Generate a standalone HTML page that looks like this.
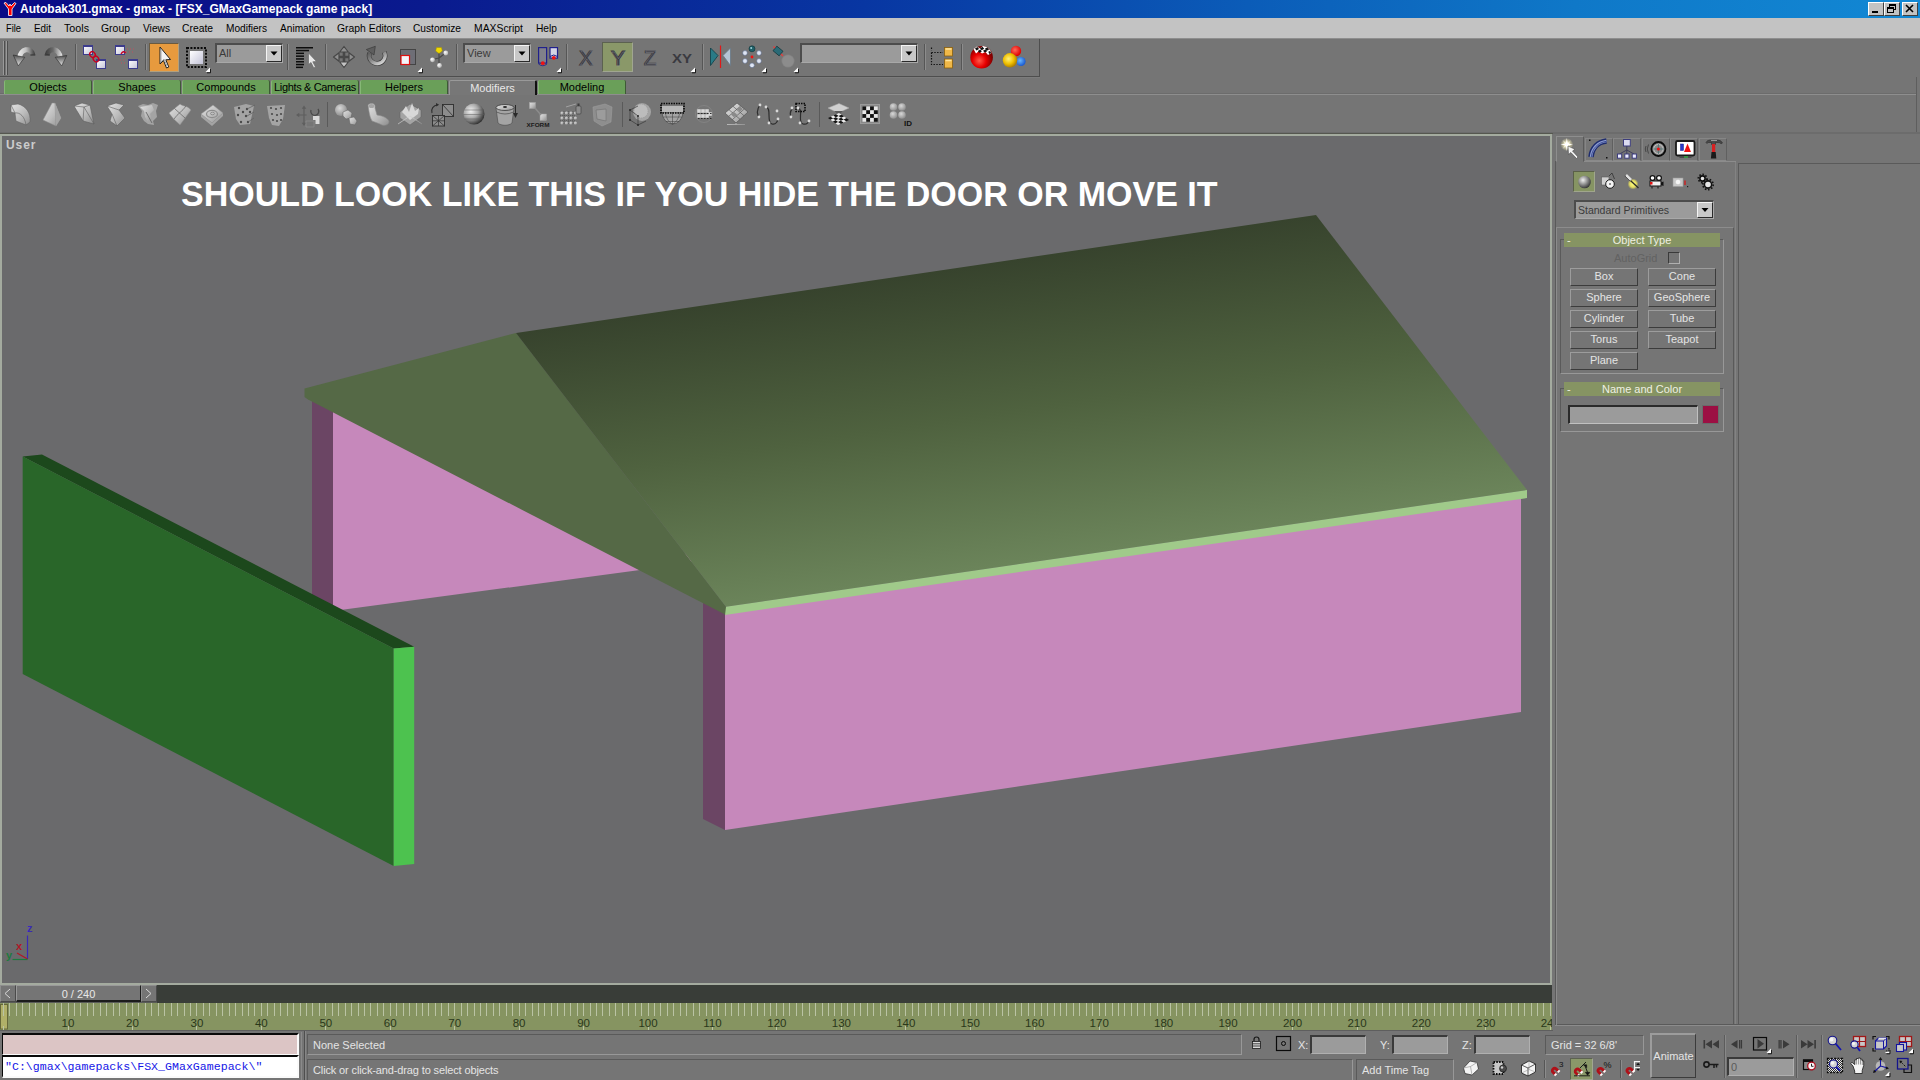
<!DOCTYPE html>
<html><head><meta charset="utf-8"><title>gmax</title>
<style>
*{box-sizing:border-box;margin:0;padding:0}
html,body{width:1920px;height:1080px;overflow:hidden;background:#757575}
body{position:relative;font-family:"Liberation Sans",sans-serif;font-size:11px;color:#000}
.a{position:absolute}
.t{position:absolute;white-space:nowrap;line-height:14px;height:14px}
svg{position:absolute;overflow:visible}
.btn{position:absolute;border:1px solid;border-color:#9c9c9c #3c3c3c #3c3c3c #9c9c9c;background:#757575;color:#e4e4e4;text-align:center;font-size:11px;line-height:15px;white-space:nowrap}
.sunk{position:absolute;border:1px solid;border-color:#3a3a3a #b0b0b0 #b0b0b0 #3a3a3a}
.fr{position:absolute;border:1px solid;border-color:#5a5a5a #989898 #989898 #5a5a5a}
.tab{position:absolute;top:80px;height:14px;background:#6a9f59;border-right:1px solid #3d5a35;border-left:1px solid #86b876;text-align:center;font-size:11px;line-height:14px;color:#000;white-space:nowrap;border-radius:2px 2px 0 0}
.roll{position:absolute;height:14px;background:#869463;color:#eef0e2;font-size:11px;line-height:14px;text-align:center;white-space:nowrap}
</style></head><body>

<div class="a" style="left:0;top:0;width:1920px;height:18px;background:linear-gradient(90deg,#0a0a86 0%,#0a1a8e 22%,#0836a2 45%,#0b5cb8 65%,#0f78c8 82%,#1288d4 100%)"></div>
<svg style="left:3px;top:1px" width="14" height="16" viewBox="0 0 14 16"><path d="M1 2 L3 1.5 L6 5 L7 3 L8 5 L11.5 1.5 L13 2.5 L9 8 L9 14.5 L5.5 14.5 L5.5 8 Z" fill="#f00" stroke="#fff" stroke-width="0.8"/></svg>
<div class="t" style="left:20px;top:2px;color:#fff;font-size:12px;font-weight:bold;">Autobak301.gmax - gmax - [FSX_GMaxGamepack game pack]</div>
<div class="a" style="left:1868px;top:2px;width:16px;height:14px;background:#c3c3c3;border:1px solid;border-color:#fff #404040 #404040 #fff"></div>
<div class="a" style="left:1884px;top:2px;width:16px;height:14px;background:#c3c3c3;border:1px solid;border-color:#fff #404040 #404040 #fff"></div>
<div class="a" style="left:1902px;top:2px;width:16px;height:14px;background:#c3c3c3;border:1px solid;border-color:#fff #404040 #404040 #fff"></div>
<svg style="left:1868px;top:2px" width="50" height="14" viewBox="0 0 50 14"><rect x="4" y="9" width="6" height="2" fill="#000"/><rect x="21.5" y="2.5" width="6" height="5" fill="none" stroke="#000"/><rect x="21" y="2" width="7" height="2" fill="#000"/><rect x="19.5" y="5.5" width="6" height="5" fill="#c3c3c3" stroke="#000"/><rect x="19" y="5" width="7" height="2" fill="#000"/><path d="M38 3 L45 10 M45 3 L38 10" stroke="#000" stroke-width="1.6"/></svg>
<div class="a" style="left:0px;top:18px;width:1920px;height:20px;background:#c3c3c3;"></div>
<svg style="left:0;top:18px" width="600" height="20" viewBox="0 0 600 20" font-size="11.5" fill="#000"><text x="6" y="14" textLength="15" lengthAdjust="spacingAndGlyphs">File</text><text x="34" y="14" textLength="17" lengthAdjust="spacingAndGlyphs">Edit</text><text x="64" y="14" textLength="25" lengthAdjust="spacingAndGlyphs">Tools</text><text x="101" y="14" textLength="29" lengthAdjust="spacingAndGlyphs">Group</text><text x="143" y="14" textLength="27" lengthAdjust="spacingAndGlyphs">Views</text><text x="182" y="14" textLength="31" lengthAdjust="spacingAndGlyphs">Create</text><text x="226" y="14" textLength="41" lengthAdjust="spacingAndGlyphs">Modifiers</text><text x="280" y="14" textLength="45" lengthAdjust="spacingAndGlyphs">Animation</text><text x="337" y="14" textLength="64" lengthAdjust="spacingAndGlyphs">Graph Editors</text><text x="413" y="14" textLength="48" lengthAdjust="spacingAndGlyphs">Customize</text><text x="474" y="14" textLength="49" lengthAdjust="spacingAndGlyphs">MAXScript</text><text x="536" y="14" textLength="21" lengthAdjust="spacingAndGlyphs">Help</text></svg>
<div class="a" style="left:0px;top:38px;width:1920px;height:96px;background:#757575;"></div>
<div class="a" style="left:0px;top:38px;width:1920px;height:1px;background:#8e8e8e;"></div>
<div class="a" style="left:0px;top:39px;width:1040px;height:38px;background:#757575;border-right:1px solid #4e4e4e;border-bottom:1px solid #4e4e4e"></div>
<div class="a" style="left:0px;top:77px;width:1040px;height:1px;background:#7c7c7c;"></div>
<div class="a" style="left:3px;top:41px;width:1px;height:34px;background:#9a9a9a;"></div>
<div class="a" style="left:4px;top:41px;width:1px;height:34px;background:#4e4e4e;"></div>
<div class="a" style="left:6px;top:41px;width:1px;height:34px;background:#9a9a9a;"></div>
<div class="a" style="left:7px;top:41px;width:1px;height:34px;background:#4e4e4e;"></div>
<div class="a" style="left:75px;top:44px;width:1px;height:26px;background:#565656;"></div>
<div class="a" style="left:76px;top:44px;width:1px;height:26px;background:#8c8c8c;"></div>
<div class="a" style="left:145px;top:44px;width:1px;height:26px;background:#565656;"></div>
<div class="a" style="left:146px;top:44px;width:1px;height:26px;background:#8c8c8c;"></div>
<div class="a" style="left:287px;top:44px;width:1px;height:26px;background:#565656;"></div>
<div class="a" style="left:288px;top:44px;width:1px;height:26px;background:#8c8c8c;"></div>
<div class="a" style="left:325px;top:44px;width:1px;height:26px;background:#565656;"></div>
<div class="a" style="left:326px;top:44px;width:1px;height:26px;background:#8c8c8c;"></div>
<div class="a" style="left:456px;top:44px;width:1px;height:26px;background:#565656;"></div>
<div class="a" style="left:457px;top:44px;width:1px;height:26px;background:#8c8c8c;"></div>
<div class="a" style="left:566px;top:44px;width:1px;height:26px;background:#565656;"></div>
<div class="a" style="left:567px;top:44px;width:1px;height:26px;background:#8c8c8c;"></div>
<div class="a" style="left:702px;top:44px;width:1px;height:26px;background:#565656;"></div>
<div class="a" style="left:703px;top:44px;width:1px;height:26px;background:#8c8c8c;"></div>
<div class="a" style="left:924px;top:44px;width:1px;height:26px;background:#565656;"></div>
<div class="a" style="left:925px;top:44px;width:1px;height:26px;background:#8c8c8c;"></div>
<div class="a" style="left:961px;top:44px;width:1px;height:26px;background:#565656;"></div>
<div class="a" style="left:962px;top:44px;width:1px;height:26px;background:#8c8c8c;"></div>
<div class="a" style="left:149px;top:43px;width:30px;height:29px;background:#e79a3e;border:1px solid;border-color:#6a5a40 #b0a080 #b0a080 #6a5a40"></div>
<div class="a" style="left:602px;top:42px;width:31px;height:30px;background:#8a9869;border:1px solid;border-color:#5c6250 #a0a690 #a0a690 #5c6250"></div>
<div class="sunk" style="left:215px;top:43px;width:68px;height:20px;background:#9b9b9b;border-width:2px 1px 1px 2px;border-color:#4c4c4c #a8a8a8 #a8a8a8 #4c4c4c"></div><div class="a" style="left:266px;top:45px;width:16px;height:17px;background:#c8c8c8;border:1px solid;border-color:#f4f4f4 #2a2a2a #2a2a2a #f4f4f4"></div><svg style="left:266px;top:45px" width="16" height="17" viewBox="0 0 16 17"><path d="M4.5 6.5 h7 l-3.5 4z" fill="#000"/></svg><div class="t" style="left:219px;top:46px;color:#3a3a3a;font-size:11px;">All</div>
<div class="sunk" style="left:463px;top:43px;width:68px;height:20px;background:#9b9b9b;border-width:2px 1px 1px 2px;border-color:#4c4c4c #a8a8a8 #a8a8a8 #4c4c4c"></div><div class="a" style="left:514px;top:45px;width:16px;height:17px;background:#c8c8c8;border:1px solid;border-color:#f4f4f4 #2a2a2a #2a2a2a #f4f4f4"></div><svg style="left:514px;top:45px" width="16" height="17" viewBox="0 0 16 17"><path d="M4.5 6.5 h7 l-3.5 4z" fill="#000"/></svg><div class="t" style="left:467px;top:46px;color:#3a3a3a;font-size:11px;">View</div>
<div class="sunk" style="left:800px;top:43px;width:118px;height:20px;background:#9b9b9b;border-width:2px 1px 1px 2px;border-color:#4c4c4c #a8a8a8 #a8a8a8 #4c4c4c"></div><div class="a" style="left:901px;top:45px;width:16px;height:17px;background:#c8c8c8;border:1px solid;border-color:#f4f4f4 #2a2a2a #2a2a2a #f4f4f4"></div><svg style="left:901px;top:45px" width="16" height="17" viewBox="0 0 16 17"><path d="M4.5 6.5 h7 l-3.5 4z" fill="#000"/></svg>
<svg style="left:0;top:0" width="1060" height="134" viewBox="0 0 1060 134"><defs>
<linearGradient id="gA" x1="0" y1="0" x2="0" y2="1"><stop offset="0" stop-color="#505050"/><stop offset="1" stop-color="#e8e8e8"/></linearGradient>
<linearGradient id="gB" x1="0" y1="0" x2="1" y2="1"><stop offset="0" stop-color="#fff"/><stop offset="1" stop-color="#c4c4d8"/></linearGradient>
<linearGradient id="gC" x1="0" y1="0" x2="1" y2="0"><stop offset="0" stop-color="#3a3a3a"/><stop offset="1" stop-color="#e0e0e0"/></linearGradient>
<linearGradient id="gU" gradientUnits="userSpaceOnUse" x1="17" y1="0" x2="35" y2="0"><stop offset="0" stop-color="#f4f4f4"/><stop offset="0.5" stop-color="#c0c0c0"/><stop offset="1" stop-color="#3a3a3a"/></linearGradient><linearGradient id="gV" gradientUnits="userSpaceOnUse" x1="45" y1="0" x2="63" y2="0"><stop offset="0" stop-color="#3a3a3a"/><stop offset="0.45" stop-color="#6a6a6a"/><stop offset="1" stop-color="#f0f0f0"/></linearGradient><linearGradient id="gRot" gradientUnits="userSpaceOnUse" x1="370" y1="48" x2="382" y2="67"><stop offset="0" stop-color="#4a4a4a"/><stop offset="0.5" stop-color="#8a8a8a"/><stop offset="1" stop-color="#f0f0f0"/></linearGradient><radialGradient id="gRed" cx="0.4" cy="0.65" r="0.6"><stop offset="0" stop-color="#ff5a4a"/><stop offset="0.5" stop-color="#e80000"/><stop offset="1" stop-color="#7a0000"/></radialGradient>
<radialGradient id="gYel" cx="0.4" cy="0.4" r="0.6"><stop offset="0" stop-color="#fff27a"/><stop offset="0.6" stop-color="#f0c000"/><stop offset="1" stop-color="#b08000"/></radialGradient>
<radialGradient id="gBlu" cx="0.4" cy="0.4" r="0.6"><stop offset="0" stop-color="#6ab8ff"/><stop offset="1" stop-color="#1a5ad0"/></radialGradient>
<radialGradient id="gR2" cx="0.4" cy="0.4" r="0.6"><stop offset="0" stop-color="#ff6a5a"/><stop offset="1" stop-color="#e00000"/></radialGradient>
<radialGradient id="gSph" cx="0.35" cy="0.35" r="0.7"><stop offset="0" stop-color="#f4f4f4"/><stop offset="0.5" stop-color="#a8a8a8"/><stop offset="1" stop-color="#2e2e2e"/></radialGradient>
<radialGradient id="gBall" cx="0.35" cy="0.35" r="0.7"><stop offset="0" stop-color="#fff"/><stop offset="1" stop-color="#b0b0b0"/></radialGradient>
<radialGradient id="gGs" cx="0.4" cy="0.35" r="0.7"><stop offset="0" stop-color="#d8d8d8"/><stop offset="1" stop-color="#8a8a8a"/></radialGradient>
</defs>
<path d="M19.500 58.500 C20 48.500 31.500 46.500 32.800 55" fill="none" stroke="url(#gU)" stroke-width="5"/>
<path d="M13.200 55 L24.800 57.300 L18.300 65.800 Z" fill="url(#gA)" stroke="#2a2a2a" stroke-width="0.600"/>
<path d="M30.300 55 h5" stroke="#2e2e2e" stroke-width="1"/>
<path d="M47.200 55 C48.500 46.500 60 48.500 60.500 58.500" fill="none" stroke="url(#gV)" stroke-width="5"/>
<path d="M66.800 55.500 L55.200 57.300 L61.700 65.800 Z" fill="url(#gA)" stroke="#2a2a2a" stroke-width="0.600"/>
<path d="M44.700 55 h5" stroke="#2e2e2e" stroke-width="1"/>
<rect x="83.5" y="45.5" width="9" height="9" fill="url(#gB)" stroke="#3c3c8c" stroke-width="1"/><rect x="83" y="45" width="10" height="2" fill="#3c3c8c"/>
<rect x="96.5" y="59.5" width="9" height="9" fill="url(#gB)" stroke="#3c3c8c" stroke-width="1"/><rect x="96" y="59" width="10" height="2" fill="#3c3c8c"/>
<rect x="115.5" y="45.5" width="9" height="9" fill="url(#gB)" stroke="#3c3c8c" stroke-width="1"/><rect x="115" y="45" width="10" height="2" fill="#3c3c8c"/>
<rect x="128.5" y="59.5" width="9" height="9" fill="url(#gB)" stroke="#3c3c8c" stroke-width="1"/><rect x="128" y="59" width="10" height="2" fill="#3c3c8c"/>
<ellipse cx="92.5" cy="54.5" rx="2.6" ry="3" fill="none" stroke="#c80020" stroke-width="1.4" transform="rotate(-40 92.5 54.5)"/><ellipse cx="96" cy="59" rx="2.6" ry="3" fill="none" stroke="#c80020" stroke-width="1.4" transform="rotate(-40 96 59)"/>
<path d="M121 54 q2.5 -4 4.5 -1" fill="none" stroke="#c80020" stroke-width="1.4"/>
<path d="M127 49 h8 M126 52 h8 M121 57 h5 M120 60 h5 M121 63 h4" stroke="#c05060" stroke-width="1" stroke-dasharray="1 2" fill="none"/>
<path d="M160 47 L160 64 L163.5 60.5 L166.5 68 L168.8 67 L165.8 59.8 L170.5 59.5 Z" fill="#f4f4f4" stroke="#222" stroke-width="1"/>
<path d="M161 50 L161 62 L164 59 L167 66" fill="none" stroke="#a8a8a8" stroke-width="1"/>
<rect x="190" y="51" width="13" height="13" fill="url(#gB)"/>
<rect x="187" y="48" width="19" height="19" fill="none" stroke="#0a0a0a" stroke-width="2" stroke-dasharray="2 1.4"/>
<path d="M210 67.5 L210 72 L205.5 72 Z" fill="#fff"/><path d="M210.5 69 L210.5 72.8 L207 72.8" fill="none" stroke="#111" stroke-width="0.9"/>
<path d="M422 67.5 L422 72 L417.5 72 Z" fill="#fff"/><path d="M422.5 69 L422.5 72.8 L419 72.8" fill="none" stroke="#111" stroke-width="0.9"/>
<path d="M561 67.5 L561 72 L556.5 72 Z" fill="#fff"/><path d="M561.5 69 L561.5 72.8 L558 72.8" fill="none" stroke="#111" stroke-width="0.9"/>
<path d="M695 67.5 L695 72 L690.5 72 Z" fill="#fff"/><path d="M695.5 69 L695.5 72.8 L692 72.8" fill="none" stroke="#111" stroke-width="0.9"/>
<path d="M766 67.5 L766 72 L761.5 72 Z" fill="#fff"/><path d="M766.5 69 L766.5 72.8 L763 72.8" fill="none" stroke="#111" stroke-width="0.9"/>
<path d="M798 67.5 L798 72 L793.5 72 Z" fill="#fff"/><path d="M798.5 69 L798.5 72.8 L795 72.8" fill="none" stroke="#111" stroke-width="0.9"/>
<rect x="296" y="47" width="17" height="1.5" fill="#0c0c0c"/>
<rect x="296" y="49.8" width="13" height="1.5" fill="#0c0c0c"/>
<rect x="296" y="52.6" width="8" height="1.5" fill="#0c0c0c"/>
<rect x="296" y="55.4" width="8" height="1.5" fill="#0c0c0c"/>
<rect x="296" y="58.2" width="8" height="1.5" fill="#0c0c0c"/>
<rect x="296" y="61" width="8" height="1.5" fill="#0c0c0c"/>
<rect x="296" y="63.8" width="8" height="1.5" fill="#0c0c0c"/>
<rect x="296" y="66.6" width="7" height="1.5" fill="#0c0c0c"/>
<path d="M308.5 53 L308.5 64.5 L311 62.5 L313.8 68 L315.5 67 L312.8 61.8 L316.5 61.5 Z" fill="#e8e8e8" stroke="#6a6a6a" stroke-width="0.7"/>
<path d="M344 50 V64 M337 57 H351" stroke="#484848" stroke-width="2.600"/>
<g fill="#8e8e8e" stroke="#474747" stroke-width="1.200" stroke-linejoin="round"><path d="M344 46.500 L348.300 52 L339.700 52 Z"/><path d="M354.500 57 L349 61.300 L349 52.700 Z"/><path d="M333.500 57 L339 52.700 L339 61.300 Z"/><path d="M344 67.500 L339.700 62 L348.300 62 Z" fill="#c4c4c4"/></g>
<path d="M369.500 53 A8 8 0 1 0 384.300 52" fill="none" stroke="#3a3a3a" stroke-width="4.600"/>
<path d="M369.500 53 A8 8 0 1 0 384.300 52" fill="none" stroke="url(#gRot)" stroke-width="3.400"/>
<path d="M366.300 49.500 L375.300 46.300 L374 55 Z" fill="#5e5e5e" stroke="#333" stroke-width="0.600"/>
<rect x="400.5" y="49.5" width="15" height="15" fill="#6e6e76" stroke="#444" stroke-width="1"/><rect x="401" y="55.5" width="8.5" height="9" fill="#f4f4fa" stroke="#e01010" stroke-width="1.2"/>
<path d="M439 51 L439 65 M439 58 L445.5 53 M439 58 L432.5 59.5" stroke="#4a4a4a" stroke-width="1.2" fill="none"/>
<path d="M436.5 47.5 h5 l0.8 3.5 l-3.3 2.5 l-3.3 -2.5z" fill="#f0d800" stroke="#a09000" stroke-width="0.5"/>
<circle cx="445.8" cy="53" r="2.4" fill="url(#gBall)"/>
<circle cx="432.5" cy="59.8" r="2.4" fill="url(#gBall)"/>
<circle cx="439.5" cy="65.5" r="2.4" fill="url(#gBall)"/>
<rect x="538.600" y="47.600" width="8" height="15.500" fill="#80808a" stroke="#20208c" stroke-width="1.200"/><rect x="550" y="47.600" width="7.500" height="10.500" fill="#d4d4e4" stroke="#20208c" stroke-width="1.200"/>
<path d="M538.500 64 q4.200 3.500 8.500 0" fill="none" stroke="#20208c" stroke-width="0.800"/><path d="M550 56.500 q3.700 -3 7.500 0" fill="none" stroke="#20208c" stroke-width="1"/>
<circle cx="542.800" cy="63.200" r="1.900" fill="#f01010"/><circle cx="553.800" cy="57.800" r="1.900" fill="#f01010"/>
<g font-family="Liberation Sans,sans-serif" fill="#3a3a40" stroke="#3a3a40" stroke-width="1.2" text-anchor="middle"><text x="586" y="64.5" font-size="20">X</text><text x="618" y="65" font-size="21">Y</text><text x="650" y="64.5" font-size="20">Z</text><text x="682" y="62.5" font-size="12" font-weight="bold" stroke="none" textLength="20" lengthAdjust="spacingAndGlyphs">XY</text></g>
<g font-family="Liberation Sans,sans-serif" fill="none" stroke="#a0a0a8" stroke-width="0.4" text-anchor="middle" opacity="0.7"><text x="586.6" y="65.1" font-size="20">X</text><text x="618.6" y="65.6" font-size="21">Y</text><text x="650.6" y="65.1" font-size="20">Z</text></g>
<path d="M710.5 48 L718 55.5 L710.5 65.5 Z" fill="#2a7a86" stroke="#0e3e46" stroke-width="0.8"/><path d="M730.5 48 L723 55.5 L730.5 65.5 Z" fill="#b4c4d4" stroke="#687888" stroke-width="0.8"/><path d="M720.5 45.5 V68" stroke="#e01818" stroke-width="1.2"/>
<circle cx="752" cy="48.8" r="3" fill="#206068" stroke="#0c3036" stroke-width="0.6"/><circle cx="751.2" cy="48" r="1" fill="#9ad0d8"/>
<circle cx="745" cy="53" r="2.4" fill="#dfe6f4" stroke="#5a6a8a" stroke-width="0.6"/>
<circle cx="759" cy="53" r="2.4" fill="#dfe6f4" stroke="#5a6a8a" stroke-width="0.6"/>
<circle cx="745" cy="61" r="2.4" fill="#dfe6f4" stroke="#5a6a8a" stroke-width="0.6"/>
<circle cx="759" cy="61" r="2.4" fill="#dfe6f4" stroke="#5a6a8a" stroke-width="0.6"/>
<circle cx="752" cy="65.3" r="2.4" fill="#dfe6f4" stroke="#5a6a8a" stroke-width="0.6"/>
<circle cx="752" cy="57" r="1.4" fill="#f01010"/>
<rect x="-4" y="-3" width="8" height="6" fill="#2a6a76" stroke="#0e3238" stroke-width="0.7" transform="translate(778 51) rotate(40)"/><path d="M773.5 46.5 l1.5 1.5 M781 54 l2 2" stroke="#e04040" stroke-width="1.5"/><circle cx="788" cy="61" r="6.3" fill="#8c8c8c" stroke="#7e7e7e" stroke-width="0.6"/>
<path d="M931.5 47.5 v3 M931.5 52.5 h11.5 M931.5 52.5 v12 h11.5" fill="none" stroke="#111" stroke-width="1.2" stroke-dasharray="1.4 1.4"/>
<rect x="944.5" y="47.5" width="8" height="8.5" fill="#f0b848" stroke="#8a6010" stroke-width="0.8"/><rect x="944.5" y="59" width="8" height="9" fill="#f0b848" stroke="#8a6010" stroke-width="0.8"/><path d="M945.5 49 h6 M945.5 60.5 h6" stroke="#ffe49a" stroke-width="1.4"/>
<circle cx="981.6" cy="57.3" r="11.3" fill="url(#gRed)"/>
<g><path d="M973.5 49 L977 46.5 L980 48.5 L983 46 L986.5 47 L990 50 L991.5 53 L988 55 L985.5 52 L982 53.5 L979 51 L976 53.5 Z" fill="#fff"/><path d="M975 48.5 l2.5 -1.5 l1.5 2 l-2.5 1.5z M980 48.5 l2.5 -1.7 l1.7 2 l-2.5 1.5z M985 48.5 l2.3 -1 l1.7 2.2 l-2.5 1z M977.8 51 l2.5 -1.5 l1.5 2 l-2.5 1.3z M983 50.8 l2.5 -1.3 l1.5 2 l-2.3 1z M988.3 51.7 l1.8 -0.8 l1 2 l-1.8 1z" fill="#111"/></g>
<circle cx="1016" cy="51" r="5.2" fill="url(#gR2)"/><circle cx="1021" cy="61.5" r="4.6" fill="url(#gBlu)"/><circle cx="1010" cy="60.3" r="7.2" fill="url(#gYel)"/></svg>
<div class="a" style="left:0px;top:93px;width:1916px;height:1px;background:#6c6c6c;"></div>
<div class="a" style="left:0px;top:94px;width:1916px;height:1px;background:#8e8e8e;"></div>
<div class="a" style="left:1916px;top:77px;width:1px;height:55px;background:#5e5e5e;"></div>
<div class="tab" style="left:4px;width:88px;">Objects</div>
<div class="tab" style="left:93px;width:88px;">Shapes</div>
<div class="tab" style="left:182px;width:88px;">Compounds</div>
<div class="tab" style="left:271px;width:88px;letter-spacing:-0.35px;">Lights &amp; Cameras</div>
<div class="tab" style="left:360px;width:88px;">Helpers</div>
<div class="tab" style="left:449px;width:88px;background:#777;color:#e8e8e8;border-left:1px solid #999;border-right:2px solid #111;border-top:1px solid #999;height:15px">Modifiers</div>
<div class="tab" style="left:538px;width:88px;">Modeling</div>
<svg style="left:0;top:0" width="1060" height="134" viewBox="0 0 1060 134"><defs><linearGradient id="gSh" x1="0" y1="0" x2="1" y2="1"><stop offset="0" stop-color="#e2e2e2"/><stop offset="0.55" stop-color="#bcbcbc"/><stop offset="1" stop-color="#8e8e8e"/></linearGradient></defs>
<path d="M11 105 L18 104 C26 106 31 113 30 122 L26 125 L16 121 L15 113 L11 112 Z" fill="url(#gSh)" stroke="#5e5e5e" stroke-width="0.5"/><path d="M15 113 C20 112 25 117 26 125 M11 105 L15 113" fill="none" stroke="#5e5e5e" stroke-width="0.6"/>
<path d="M52 103 L55 103 L61 118 L56 126 L43 120 Z" fill="url(#gSh)" stroke="#8c8c8c" stroke-width="0.5"/><path d="M55 103 L56 126 " stroke="#8c8c8c" stroke-width="0.6"/><path d="M55 103 L61 118 L56 126 Z" fill="#a4a4a4"/>
<path d="M74 106 L82 103 L90 105 L94 124 L83 121 Z" fill="url(#gSh)" stroke="#5e5e5e" stroke-width="0.6"/><path d="M74 106 L84 107 L94 124 M84 107 L90 105 M84 107 L83 121" fill="none" stroke="#5e5e5e" stroke-width="0.6"/>
<path d="M107 106 L116 103 L124 105 L119 110 L125 118 L117 126 L110 121 L112 114 Z" fill="url(#gSh)" stroke="#5e5e5e" stroke-width="0.6"/><path d="M107 106 L119 110 M112 114 L117 126" stroke="#5e5e5e" stroke-width="0.6"/>
<path d="M138 106 L143 104 L148 105 L153 103 L158 105 L156 111 L157 117 L153 121 L154 125 L148 124 L144 121 L141 116 L142 111 Z" fill="#a4a4a4"/><path d="M140 107 L146 106 L152 105 L154 110 L150 114 L152 119 L148 122 L145 117 L144 111 Z" fill="url(#gSh)"/><path d="M146 112 L152 123" stroke="#5e5e5e" stroke-width="0.8"/>
<path d="M169 113 L180 104 C184 107 187 105 191 110 L180 125 C176 121 173 119 169 113 Z" fill="url(#gSh)" stroke="#8c8c8c" stroke-width="0.5"/><path d="M174.5 108.5 L185 118 M174 119 C178 113 182 112 186 106" stroke="#5e5e5e" stroke-width="0.7" fill="none"/>
<path d="M201 114 L213 105 L223 113 L212 123 Z" fill="url(#gSh)" stroke="#8c8c8c" stroke-width="0.5"/><path d="M201 114 L212 123 L212 126 L201 117 Z M212 123 L223 113 L223 116 L212 126Z" fill="#a4a4a4"/><ellipse cx="212" cy="114" rx="5.5" ry="3.6" fill="none" stroke="#8c8c8c" stroke-width="1.2"/><ellipse cx="212.5" cy="113.5" rx="2" ry="1.3" fill="none" stroke="#8c8c8c" stroke-width="1"/>
<path d="M234 107 L246 104 L254 106 L250 124 L240 125 L236 119 Z" fill="#a4a4a4"/>
<circle cx="239" cy="108" r="1.2" fill="#4a4a4a"/>
<circle cx="247" cy="109" r="1.2" fill="#4a4a4a"/>
<circle cx="238" cy="115" r="1.2" fill="#4a4a4a"/>
<circle cx="246" cy="116" r="1.2" fill="#4a4a4a"/>
<circle cx="241" cy="122" r="1.2" fill="#4a4a4a"/>
<circle cx="248" cy="122" r="1.2" fill="#4a4a4a"/>
<circle cx="243" cy="112" r="1.2" fill="#4a4a4a"/>
<circle cx="250" cy="112" r="1.2" fill="#4a4a4a"/>
<path d="M247 109 L255 105 M247 116 L254 112 M248 122 L254 118" stroke="#5e5e5e" stroke-width="0.7"/>
<path d="M267 106 L285 105 L283 119 L279 126 L272 125 L269 118 Z" fill="#a4a4a4"/>
<circle cx="271" cy="108" r="1.1" fill="#4a4a4a"/>
<circle cx="276" cy="109" r="1.1" fill="#4a4a4a"/>
<circle cx="281" cy="108" r="1.1" fill="#4a4a4a"/>
<circle cx="272" cy="114" r="1.1" fill="#4a4a4a"/>
<circle cx="277" cy="115" r="1.1" fill="#4a4a4a"/>
<circle cx="281" cy="114" r="1.1" fill="#4a4a4a"/>
<circle cx="273" cy="120" r="1.1" fill="#4a4a4a"/>
<circle cx="277" cy="121" r="1.1" fill="#4a4a4a"/>
<circle cx="281" cy="120" r="1.1" fill="#4a4a4a"/>
<path d="M304 108 v16 M297.5 115 h9" stroke="#5e5e5e" stroke-width="1.2"/><path d="M304 105.5 l2.3 3.3 h-4.6z M304 126 l2.3 -3.3 h-4.6z M296 115 l3.3 -2.3 v4.6z" fill="#5e5e5e"/><path d="M311 110 a4 4 0 1 0 7 -1" fill="none" stroke="#4a4a4a" stroke-width="1.3"/><path d="M313 116 h6.5 v8 h-4 v-4 h-2.5z" fill="#d8d8d8"/><path d="M306 121 h8 v6 h-8z" fill="none" stroke="#8c8c8c" stroke-width="0.8"/>
<rect x="327" y="102" width="1" height="25" fill="#5a5a5a"/>
<circle cx="341" cy="110" r="6" fill="url(#gGs)"/><path d="M343 112 l5 -2 l4 3 l-1 5 l-5 1 l-3 -3z" fill="url(#gSh)" stroke="#5e5e5e" stroke-width="0.5"/><path d="M349 118 l5 -1 l3 4 l-2 4 l-5 -1z" fill="url(#gSh)" stroke="#5e5e5e" stroke-width="0.5"/>
<path d="M368 105 C372 102 376 104 375 108 L377 115 C384 116 389 119 389 122 C388 126 383 126 380 124 L372 121 C369 116 369 110 368 105 Z" fill="url(#gSh)" stroke="#8c8c8c" stroke-width="0.6"/><ellipse cx="371.5" cy="106" rx="3" ry="2" fill="#a4a4a4"/>
<path d="M400 112 L410 104 L421 110 L421 117 L410 125 L400 118 Z" fill="#a4a4a4" stroke="#5e5e5e" stroke-width="0.5"/><path d="M402 112 L406 106 L409 112 L412 103 L415 111 L419 108 L418 114 L410 120 Z" fill="#d8d8d8"/><path d="M398 124 L410 116 L422 124" fill="none" stroke="url(#gSh)" stroke-width="0.8"/>
<rect x="442.5" y="104.5" width="11" height="12" fill="#8c8c8c" stroke="#2e2e2e" stroke-width="0.9"/><path d="M442.5 104.5 L453.5 116.5" stroke="#2e2e2e" stroke-width="0.8"/><rect x="432.5" y="115.5" width="12" height="10.500" fill="#8c8c8c" stroke="#2e2e2e" stroke-width="0.9"/><path d="M432.500 115.500 L444.500 126 M444.500 115.500 L432.500 126 M438.500 115.500 V126 M432.500 120.800 H444.500" stroke="#2e2e2e" stroke-width="0.7"/><path d="M432 113 a6 6 0 0 1 5.500 -8" fill="none" stroke="#2e2e2e" stroke-width="1.1"/><path d="M436 103 l3.200 1.800 l-3.200 1.700z" fill="#2e2e2e"/>
<circle cx="474" cy="114" r="10.5" fill="url(#gSph)"/><path d="M464 110 h20 M463.500 114.500 h21 M464.500 119 h19" stroke="#5a5a5a" stroke-width="0.5"/>
<path d="M496 108 L514 108 L512 123 C509 126 501 126 498 123 Z" fill="#a4a4a4" stroke="#4a4a4a" stroke-width="0.6"/><ellipse cx="505" cy="107.500" rx="9" ry="3" fill="url(#gSh)" stroke="#3a3a3a" stroke-width="0.8"/><ellipse cx="505" cy="107" rx="2" ry="0.900" fill="#2a2a2a"/><path d="M496.500 112 q8.500 4 17 0" fill="none" stroke="#4a4a4a" stroke-width="0.7"/><path d="M515.500 105 v10" stroke="#2a2a2a" stroke-width="1"/><path d="M513 113 h5 l-2.500 5z" fill="#2a2a2a"/>
<rect x="529.500" y="102.500" width="6" height="6" fill="url(#gSh)" stroke="#a4a4a4" stroke-width="0.5"/><rect x="540" y="114" width="6.500" height="6.500" fill="url(#gSh)" stroke="#a4a4a4" stroke-width="0.5"/><path d="M535 108 L541 115" stroke="#8c8c8c" stroke-width="1.500"/><text x="538" y="127" font-size="6" font-weight="bold" fill="#1a1a1a" text-anchor="middle" textLength="23" lengthAdjust="spacingAndGlyphs">XFORM</text>
<circle cx="562.0" cy="113" r="1.500" fill="url(#gSh)"/>
<circle cx="566.5" cy="113" r="1.500" fill="url(#gSh)"/>
<circle cx="571.0" cy="113" r="1.500" fill="url(#gSh)"/>
<circle cx="575.5" cy="113" r="1.500" fill="url(#gSh)"/>
<circle cx="562.0" cy="118" r="1.500" fill="url(#gSh)"/>
<circle cx="566.5" cy="118" r="1.500" fill="url(#gSh)"/>
<circle cx="571.0" cy="118" r="1.500" fill="url(#gSh)"/>
<circle cx="575.5" cy="118" r="1.500" fill="url(#gSh)"/>
<circle cx="562.0" cy="123" r="1.500" fill="url(#gSh)"/>
<circle cx="566.5" cy="123" r="1.500" fill="url(#gSh)"/>
<circle cx="571.0" cy="123" r="1.500" fill="url(#gSh)"/>
<circle cx="575.5" cy="123" r="1.500" fill="url(#gSh)"/>
<path d="M560 115.500 h15 M560 120.500 h15 M564 111 v14 M568.500 111 v14 M573 111 v14" stroke="#4a4a4a" stroke-width="0.5" stroke-dasharray="1 1"/><rect x="576" y="106" width="5" height="8" rx="1" fill="#8c8c8c" stroke="#3a3a3a" stroke-width="0.6"/><rect x="577.500" y="103.500" width="2" height="2.500" fill="#3a3a3a"/><path d="M566 107 L576 104" stroke="url(#gSh)" stroke-width="1" opacity="0.6"/>
<path d="M593 107 L605 104 L612 107 L611 122 L602 126 L594 121 Z" fill="#8e8e8e" stroke="#9c9c9c" stroke-width="0.6"/><path d="M596 110 L606 109 L606 121 L597 119Z" fill="#9c9c9c" stroke="#686868" stroke-width="0.5"/>
<rect x="622" y="102" width="1" height="25" fill="#5a5a5a"/>
<circle cx="642" cy="112" r="9" fill="#a4a4a4"/><circle cx="641" cy="111" r="7" fill="#bcbcbc" stroke="#8a8a8a" stroke-width="0.5" stroke-dasharray="1 1"/><path d="M630 110 L638 106 M630 110 L630 120 L638 125 L638 116 L630 110 M638 125 L646 121" fill="none" stroke="#3a3a3a" stroke-width="0.7"/>
<circle cx="630" cy="110" r="1" fill="#2a2a2a"/>
<circle cx="630" cy="120" r="1" fill="#2a2a2a"/>
<circle cx="638" cy="125" r="1" fill="#2a2a2a"/>
<circle cx="638" cy="116" r="1" fill="#2a2a2a"/>
<path d="M662 112 h21 a10.500 12 0 0 1 -21 0z" fill="#a4a4a4" stroke="#3a3a3a" stroke-width="0.6"/><path d="M665 112 q2 10 7.500 12 q5.500 -2 7.500 -12 M672.500 112 v12 M663 117 h19 M666 121.500 h13" fill="none" stroke="#3a3a3a" stroke-width="0.5"/><path d="M662 106 h21 v6 h-21z" fill="#b8b8b8"/><rect x="661" y="103.500" width="23" height="9.500" fill="none" stroke="#0a0a0a" stroke-width="1.700" stroke-dasharray="1.500 1"/>
<circle cx="704" cy="114" r="8.500" fill="none" stroke="#888" stroke-width="0.700"/>
<rect x="697.2" y="109.2" width="3.600" height="3.600" fill="#d8d8d8"/>
<rect x="701.2" y="109.2" width="3.600" height="3.600" fill="#d8d8d8"/>
<rect x="705.2" y="109.2" width="3.600" height="3.600" fill="#d8d8d8"/>
<rect x="697.2" y="114.2" width="3.600" height="3.600" fill="#d8d8d8"/>
<rect x="701.2" y="114.2" width="3.600" height="3.600" fill="#d8d8d8"/>
<rect x="705.2" y="114.2" width="3.600" height="3.600" fill="#d8d8d8"/>
<rect x="708.2" y="112.2" width="3.600" height="3.600" fill="#d8d8d8"/>
<path d="M698 113.500 h14 M698 118.500 h14" stroke="#2a2a2a" stroke-width="1" stroke-dasharray="1.500 1.500"/>
<path d="M725 113 L737 103 L748 112 L736 123 Z" fill="url(#gSh)" stroke="#4a4a4a" stroke-width="0.600"/><path d="M729 109.700 L740 119.300 M733 106.300 L744 115.700 M728.700 116.300 L740.700 106 M732.300 119.700 L744.300 109" stroke="#4a4a4a" stroke-width="0.600"/><path d="M731 114.500 l3 -2.500 l3 2.500 l-3 2.700z M737 109 l3 -2.500 l3 2.500 l-3 2.700z" fill="#8a8a8a"/><path d="M727 124.500 h18 M736 123 v2" stroke="url(#gSh)" stroke-width="0.800"/>
<path d="M760 105 C756 110 757 116 760 118 M766 107 C772 108 766 122 772 124 C776 125 778 121 778 118" fill="none" stroke="#2e2e2e" stroke-width="1.200"/>
<circle cx="760" cy="105" r="1.400" fill="#d8d8d8"/>
<circle cx="766" cy="107" r="1.400" fill="#d8d8d8"/>
<circle cx="759" cy="117" r="1.400" fill="#d8d8d8"/>
<circle cx="769" cy="123" r="1.400" fill="#d8d8d8"/>
<circle cx="778" cy="119" r="1.400" fill="#d8d8d8"/>
<circle cx="777" cy="111" r="1.400" fill="#d8d8d8"/>
<path d="M793 108 C789 112 790 116 792 118 M798 108 C804 109 797 122 803 124 C807 125 809 122 809 120" fill="none" stroke="#2e2e2e" stroke-width="1.200"/><rect x="796" y="103.500" width="9" height="8" fill="none" stroke="#0a0a0a" stroke-width="1.600" stroke-dasharray="1.500 1"/>
<circle cx="792" cy="108" r="1.400" fill="#d8d8d8"/>
<circle cx="798" cy="108" r="1.400" fill="#d8d8d8"/>
<circle cx="791" cy="117" r="1.400" fill="#d8d8d8"/>
<circle cx="800" cy="123" r="1.400" fill="#d8d8d8"/>
<circle cx="809" cy="121" r="1.400" fill="#d8d8d8"/>
<rect x="819" y="102" width="1" height="25" fill="#5a5a5a"/>
<path d="M828 108 L839 103.500 L849 108 L838 113 Z" fill="#d0d0d0" stroke="#a8a8a8" stroke-width="0.500"/>
<path d="M834 111 h9 l-4.500 4z" fill="#5a5a5a"/>
<path d="M828.0 118.0 L830.8 116.8 L833.2 118.5 L830.5 119.8Z" fill="#141414"/>
<path d="M830.5 119.8 L833.2 118.5 L835.8 120.2 L833.0 121.5Z" fill="#ececec"/>
<path d="M833.0 121.5 L835.8 120.2 L838.2 122.0 L835.5 123.2Z" fill="#141414"/>
<path d="M835.5 123.2 L838.2 122.0 L840.8 123.8 L838.0 125.0Z" fill="#ececec"/>
<path d="M830.8 116.8 L833.5 115.5 L836.0 117.2 L833.2 118.5Z" fill="#ececec"/>
<path d="M833.2 118.5 L836.0 117.2 L838.5 119.0 L835.8 120.2Z" fill="#141414"/>
<path d="M835.8 120.2 L838.5 119.0 L841.0 120.8 L838.2 122.0Z" fill="#ececec"/>
<path d="M838.2 122.0 L841.0 120.8 L843.5 122.5 L840.8 123.8Z" fill="#141414"/>
<path d="M833.5 115.5 L836.2 114.2 L838.8 116.0 L836.0 117.2Z" fill="#141414"/>
<path d="M836.0 117.2 L838.8 116.0 L841.2 117.8 L838.5 119.0Z" fill="#ececec"/>
<path d="M838.5 119.0 L841.2 117.8 L843.8 119.5 L841.0 120.8Z" fill="#141414"/>
<path d="M841.0 120.8 L843.8 119.5 L846.2 121.2 L843.5 122.5Z" fill="#ececec"/>
<path d="M836.2 114.2 L839.0 113.0 L841.5 114.8 L838.8 116.0Z" fill="#ececec"/>
<path d="M838.8 116.0 L841.5 114.8 L844.0 116.5 L841.2 117.8Z" fill="#141414"/>
<path d="M841.2 117.8 L844.0 116.5 L846.5 118.2 L843.8 119.5Z" fill="#ececec"/>
<path d="M843.8 119.5 L846.5 118.2 L849.0 120.0 L846.2 121.2Z" fill="#141414"/>
<rect x="860.500" y="104.500" width="19" height="19" fill="#888" stroke="#9a9a9a" stroke-width="1"/>
<rect x="862.5" y="106.5" width="3.800" height="3.800" fill="#111"/>
<rect x="866.3" y="106.5" width="3.800" height="3.800" fill="#e8e8e8"/>
<rect x="870.1" y="106.5" width="3.800" height="3.800" fill="#111"/>
<rect x="873.9" y="106.5" width="3.800" height="3.800" fill="#e8e8e8"/>
<rect x="862.5" y="110.3" width="3.800" height="3.800" fill="#e8e8e8"/>
<rect x="866.3" y="110.3" width="3.800" height="3.800" fill="#111"/>
<rect x="870.1" y="110.3" width="3.800" height="3.800" fill="#e8e8e8"/>
<rect x="873.9" y="110.3" width="3.800" height="3.800" fill="#111"/>
<rect x="862.5" y="114.1" width="3.800" height="3.800" fill="#111"/>
<rect x="866.3" y="114.1" width="3.800" height="3.800" fill="#e8e8e8"/>
<rect x="870.1" y="114.1" width="3.800" height="3.800" fill="#111"/>
<rect x="873.9" y="114.1" width="3.800" height="3.800" fill="#e8e8e8"/>
<rect x="862.5" y="117.9" width="3.800" height="3.800" fill="#e8e8e8"/>
<rect x="866.3" y="117.9" width="3.800" height="3.800" fill="#111"/>
<rect x="870.1" y="117.9" width="3.800" height="3.800" fill="#e8e8e8"/>
<rect x="873.9" y="117.9" width="3.800" height="3.800" fill="#111"/>
<circle cx="893.5" cy="107" r="3.800" fill="url(#gGs)"/>
<circle cx="902" cy="107" r="3.800" fill="url(#gGs)"/>
<circle cx="893.5" cy="115" r="3.800" fill="url(#gGs)"/>
<circle cx="902" cy="115" r="3.800" fill="url(#gGs)"/>
<text x="904" y="126" font-size="8" font-weight="bold" fill="#111">ID</text></svg>
<div class="a" style="left:0px;top:132px;width:1920px;height:2px;background:#6c6c6c;"></div>
<div class="a" style="left:0px;top:133px;width:1553px;height:1px;background:#55574f;"></div>
<div class="a" style="left:0px;top:134px;width:1552px;height:851px;background:#a4ab9f;"></div>
<div class="a" style="left:2px;top:136px;width:1548px;height:847px;background:#6a6a6c;"></div>
<svg style="left:0;top:0" width="1553" height="984" viewBox="0 0 1553 984">
<defs><linearGradient id="roofg" gradientUnits="userSpaceOnUse" x1="516" y1="333" x2="560" y2="631">
<stop offset="0" stop-color="#37432d"/><stop offset="0.5" stop-color="#4f623f"/><stop offset="1" stop-color="#6b845a"/></linearGradient></defs>
<polygon points="312,401 333,401 333,611 312,600" fill="#6b4564"/>
<polygon points="333,401 700,560 640,570 333,611" fill="#c688bb"/>
<polygon points="703,590 725,607 725,830 703,819" fill="#6b4564"/>
<polygon points="725,612 1521,496 1521,712 725,830" fill="#c688bb"/>
<polygon points="304.5,388.5 516,333 726,606.700 726,615 308,399.500 304.500,397" fill="#556946"/>
<polygon points="516,333 1316,215 1527,490 726,606.700" fill="url(#roofg)"/>
<polygon points="726,606.700 1527,490 1527,498 725,615" fill="#a0ca8a"/>
<polygon points="22.700,456.500 42,454.600 414.200,646.800 393.700,648.400" fill="#1c481c"/>
<polygon points="22.700,456.500 393.700,648.400 393.700,866 22.700,674" fill="#296629"/>
<polygon points="393.700,648.400 414.200,646.800 414.200,864 393.700,866" fill="#4dc24f"/>
<!-- axis tripod -->
<path d="M27.500 959 V935.500" stroke="#3a2ab8" stroke-width="1.200"/><path d="M27.500 959 L17 953" stroke="#b01828" stroke-width="1.200"/><path d="M27.500 959.500 L12.500 959.500" stroke="#1e7a3e" stroke-width="1.200"/>
<g font-family="Liberation Sans,sans-serif" font-weight="bold" font-size="11"><text x="27" y="932" fill="#3a2ab8">z</text><text x="16" y="950" fill="#b01828">x</text><text x="6" y="959" fill="#1e7a3e">y</text></g>
</svg>
<div class="t" style="left:180.5px;top:174px;color:#fff;font-weight:bold;font-size:35px;line-height:40px;height:40px;transform:scaleX(0.9715);transform-origin:0 0">SHOULD LOOK LIKE THIS IF YOU HIDE THE DOOR OR MOVE IT</div>
<div class="t" style="left:6px;top:138px;color:#cccccc;font-size:12px;font-weight:bold;letter-spacing:0.9px;">User</div>
<div class="a" style="left:1553px;top:134px;width:367px;height:892px;background:#757575;"></div>
<div class="a" style="left:1555px;top:161px;width:1px;height:864px;background:#5a5a5a;"></div>
<div class="a" style="left:1735px;top:161px;width:1px;height:864px;background:#838383;"></div>
<div class="a" style="left:1738px;top:164px;width:1px;height:861px;background:#5a5a5a;"></div>
<div class="a" style="left:1738px;top:163px;width:182px;height:1px;background:#5a5a5a;"></div>
<div class="a" style="left:1555px;top:1024px;width:365px;height:1px;background:#5a5a5a;"></div>
<div class="a" style="left:1555px;top:1025px;width:365px;height:1px;background:#8c8c8c;"></div>
<div class="a" style="left:1556px;top:136px;width:28px;height:26px;background:#757575;border:1px solid;border-color:#8e8e8e #5a5a5a transparent #8e8e8e"></div>
<div class="a" style="left:1585px;top:138px;width:28px;height:23px;background:#757575;border:1px solid;border-color:#868686 #606060 #8a8a8a #868686"></div>
<div class="a" style="left:1613px;top:138px;width:28px;height:23px;background:#757575;border:1px solid;border-color:#868686 #606060 #8a8a8a #868686"></div>
<div class="a" style="left:1642px;top:138px;width:28px;height:23px;background:#757575;border:1px solid;border-color:#868686 #606060 #8a8a8a #868686"></div>
<div class="a" style="left:1670px;top:138px;width:28px;height:23px;background:#757575;border:1px solid;border-color:#868686 #606060 #8a8a8a #868686"></div>
<div class="a" style="left:1699px;top:138px;width:28px;height:23px;background:#757575;border:1px solid;border-color:#868686 #606060 #8a8a8a #868686"></div>
<div class="a" style="left:1584px;top:161px;width:152px;height:1px;background:#8c8c8c;"></div>
<div class="a" style="left:1573px;top:171px;width:22px;height:21px;background:#869463;border:1px solid;border-color:#5a6048 #a0a68c #a0a68c #5a6048"></div>
<svg style="left:0;top:0" width="1920" height="260" viewBox="0 0 1920 260"><defs><radialGradient id="gStar" cx="0.5" cy="0.5" r="0.5"><stop offset="0" stop-color="#ffffff"/><stop offset="0.35" stop-color="#fff8c8" stop-opacity="0.9"/><stop offset="1" stop-color="#e8e0a0" stop-opacity="0"/></radialGradient>
<radialGradient id="gSp2" cx="0.38" cy="0.35" r="0.7"><stop offset="0" stop-color="#f0f0f0"/><stop offset="0.5" stop-color="#909090"/><stop offset="1" stop-color="#303030"/></radialGradient>
<radialGradient id="gGlow" cx="0.5" cy="0.5" r="0.5"><stop offset="0" stop-color="#ffff80"/><stop offset="0.6" stop-color="#f0e860" stop-opacity="0.9"/><stop offset="1" stop-color="#e0d850" stop-opacity="0"/></radialGradient></defs>
<circle cx="1566.8" cy="144.5" r="6.5" fill="url(#gStar)"/><path d="M1566.800 138 L1567.800 143.500 L1573 144.500 L1567.800 145.500 L1566.800 151 L1565.800 145.500 L1560.500 144.500 L1565.800 143.500Z M1562.500 140 L1567 144 L1571 140.200 L1567.500 145 L1571 149 L1566.500 145.300 L1562.500 149 L1566 144.500Z" fill="#fff"/>
<path d="M1568 146 L1568.500 154.500 L1570.800 152.500 L1576.500 158.500 L1578 157 L1572.500 151 L1575 149.300 Z" fill="#f4f4f4" stroke="#4a4a4a" stroke-width="0.6"/>
<path d="M1591 157 C1592 148 1598 142 1606.500 141" fill="none" stroke="#1e2c6e" stroke-width="5.500"/><path d="M1591 157 C1592 148 1598 142 1606.500 141" fill="none" stroke="#8c9cd0" stroke-width="2.600"/><path d="M1591.300 157 C1592.300 148.300 1598 142.500 1606.500 141.300" fill="none" stroke="#2c3c86" stroke-width="0.800"/>
<rect x="1589" y="139.500" width="1.500" height="1.500" fill="#111"/><rect x="1606" y="157" width="1.500" height="1.500" fill="#111"/>
<path d="M1626.800 146 V150 M1626.800 150 L1619.500 154 M1626.800 150 L1634 154 M1626.800 150 V154" stroke="#3a3a5a" stroke-width="0.900" fill="none"/>
<rect x="1623.500" y="139.500" width="6.800" height="6.500" fill="#dcdcf0" stroke="#3c3c7c" stroke-width="1"/>
<rect x="1617.5" y="154" width="4.200" height="4.200" fill="#ececff" stroke="#3c3c7c" stroke-width="1"/>
<rect x="1624.8" y="154" width="4.200" height="4.200" fill="#ececff" stroke="#3c3c7c" stroke-width="1"/>
<rect x="1632.2" y="154" width="4.200" height="4.200" fill="#ececff" stroke="#3c3c7c" stroke-width="1"/>
<circle cx="1658.400" cy="149" r="7" fill="#8a8a8a" stroke="#0a0a0a" stroke-width="1.800"/><circle cx="1658.400" cy="149" r="4.600" fill="none" stroke="#d0d0d0" stroke-width="0.800"/><path d="M1658.400 144 v10 M1653.400 149 h10" stroke="#3a6a6a" stroke-width="0.700"/><circle cx="1658.400" cy="149" r="1.500" fill="#f01010"/><path d="M1648.500 144.500 q-2.500 4.500 0 9 M1646 146 q-1.500 3 0 6" fill="none" stroke="#3a3a3a" stroke-width="0.800"/>
<rect x="1676" y="141" width="18.500" height="14.500" rx="1.500" fill="#fff" stroke="#1a1a1a" stroke-width="1.800"/><rect x="1680.500" y="144" width="3" height="6.500" fill="#2a3ac8" stroke="#101890" stroke-width="0.500"/><path d="M1687.500 143.500 L1691 152 L1684 152 Z" fill="#f01010"/><path d="M1679.500 157.500 h12" stroke="#4a4a4a" stroke-width="1"/><path d="M1684 157 h4" stroke="#30c040" stroke-width="1.200"/>
<path d="M1706 142.500 q1 -2.500 4 -2.500 h8 q3 0 4.500 3 l-1.500 0.800 q-1 -1.500 -3 -1.300 h-2.500 v2 h-4 v-2 h-3 q-1 0 -1.500 1z" fill="#4a4a4a" stroke="#222" stroke-width="0.500"/><rect x="1712" y="144" width="3.200" height="8.500" fill="#d82020"/><path d="M1711.500 152 h4.200 l0.600 6.500 h-5.400z" fill="#1a1a1a"/><path d="M1711 140.500 h6" stroke="#b0b0b0" stroke-width="0.800"/>
<circle cx="1584.500" cy="182" r="6.300" fill="url(#gSp2)"/>
<rect x="1601.500" y="177" width="7.500" height="8" fill="#d0d0d0" stroke="#5a5a5a" stroke-width="0.600"/><path d="M1609 176 l3 -3 l2.500 6" fill="none" stroke="#2a2a2a" stroke-width="0.700"/><circle cx="1610" cy="184" r="4.300" fill="#f4f4f4" stroke="#1a1a1a" stroke-width="1"/><circle cx="1610" cy="184" r="1" fill="#6a6a6a"/>
<circle cx="1633" cy="184" r="5.500" fill="url(#gGlow)"/><path d="M1625 175.500 L1638.500 188" stroke="#2a2a2a" stroke-width="1.300"/><path d="M1626 175 L1631 180" stroke="#e0e0e0" stroke-width="2.600"/><path d="M1625 176 L1630 181" stroke="#4a4a4a" stroke-width="0.800"/>
<circle cx="1652.500" cy="178" r="2.400" fill="#fff" stroke="#111" stroke-width="1.200"/><circle cx="1659" cy="178" r="2.400" fill="#fff" stroke="#111" stroke-width="1.200"/><rect x="1650" y="181" width="11" height="5" fill="#f0f0f0" stroke="#111" stroke-width="1"/><rect x="1650" y="182" width="2.500" height="2.500" fill="#e01010"/><path d="M1661 182.500 l2.500 -1 v4.500 l-2.500 -1z" fill="#111"/><path d="M1652 186.500 v2 M1658 186.500 v2" stroke="#111" stroke-width="1"/>
<rect x="1673" y="178" width="10" height="8.500" fill="#c8c8c8" stroke="#9a9a9a" stroke-width="0.600"/><circle cx="1678" cy="182" r="2.800" fill="#f4f4f4" stroke="#b0b0b0" stroke-width="0.500"/><path d="M1685 180.500 v4.500" stroke="#e01010" stroke-width="1.200"/><rect x="1687" y="186" width="1.200" height="1.200" fill="#222"/>
<circle cx="1702.5" cy="178.5" r="2.6" fill="#e8e8e8" stroke="#111" stroke-width="1.600"/><circle cx="1702.5" cy="178.5" r="4.2" fill="none" stroke="#111" stroke-width="1.600" stroke-dasharray="1.500 1.700"/>
<circle cx="1708" cy="184.5" r="3.6" fill="#e8e8e8" stroke="#111" stroke-width="1.600"/><circle cx="1708" cy="184.5" r="5.2" fill="none" stroke="#111" stroke-width="1.600" stroke-dasharray="1.500 1.700"/></svg>
<div class="sunk" style="left:1574px;top:200px;width:140px;height:19px;background:#9b9b9b;border-width:2px 1px 1px 2px;border-color:#4c4c4c #a8a8a8 #a8a8a8 #4c4c4c"></div><div class="a" style="left:1697px;top:202px;width:16px;height:16px;background:#c8c8c8;border:1px solid;border-color:#f4f4f4 #2a2a2a #2a2a2a #f4f4f4"></div><svg style="left:1697px;top:202px" width="16" height="16" viewBox="0 0 16 16"><path d="M4.5 6.0 h7 l-3.5 4z" fill="#000"/></svg><div class="t" style="left:1578px;top:203px;color:#3a3a3a;font-size:10.5px;">Standard Primitives</div>
<div class="fr" style="left:1556px;top:227px;width:178px;height:798px;border-bottom:none;border-color:#8c8c8c #5a5a5a #5a5a5a #8c8c8c"></div>
<div class="fr" style="left:1560px;top:239px;width:164px;height:135px"></div>
<div class="roll" style="left:1564px;top:233px;width:156px">Object Type</div>
<div class="t" style="left:1567px;top:233px;color:#eef0e2;font-size:11px;">-</div>
<div class="t" style="left:1614px;top:251px;color:#626262;font-size:11px;">AutoGrid</div>
<div class="sunk" style="left:1668px;top:252px;width:12px;height:12px;background:#757575"></div>
<div class="btn" style="left:1570px;top:268px;width:68px;height:18px">Box</div>
<div class="btn" style="left:1648px;top:268px;width:68px;height:18px">Cone</div>
<div class="btn" style="left:1570px;top:289px;width:68px;height:18px">Sphere</div>
<div class="btn" style="left:1648px;top:289px;width:68px;height:18px">GeoSphere</div>
<div class="btn" style="left:1570px;top:310px;width:68px;height:18px">Cylinder</div>
<div class="btn" style="left:1648px;top:310px;width:68px;height:18px">Tube</div>
<div class="btn" style="left:1570px;top:331px;width:68px;height:18px">Torus</div>
<div class="btn" style="left:1648px;top:331px;width:68px;height:18px">Teapot</div>
<div class="btn" style="left:1570px;top:352px;width:68px;height:18px">Plane</div>
<div class="fr" style="left:1560px;top:388px;width:164px;height:44px"></div>
<div class="roll" style="left:1564px;top:382px;width:156px">Name and Color</div>
<div class="t" style="left:1567px;top:382px;color:#eef0e2;font-size:11px;">-</div>
<div class="sunk" style="left:1568px;top:405px;width:130px;height:19px;background:#9b9b9b;border-width:2px 1px 1px 2px;border-color:#2a2a2a #c0c0c0 #c0c0c0 #2a2a2a"></div>
<div class="a" style="left:1702px;top:405px;width:17px;height:19px;background:#9c0f43;border:1px solid #6a6a6a"></div>
<div class="a" style="left:0px;top:985px;width:1552px;height:18px;background:#393d38;"></div>
<div class="a" style="left:0px;top:985px;width:16px;height:17px;background:#757575;border:1px solid;border-color:#8e8e8e #4a4a4a #4a4a4a #8e8e8e"></div>
<div class="a" style="left:16px;top:985px;width:125px;height:17px;background:#757575;border:1px solid;border-color:#9a9a9a #1c1c1c #1c1c1c #9a9a9a;border-bottom-width:2px"></div>
<div class="a" style="left:141px;top:985px;width:16px;height:17px;background:#757575;border:1px solid;border-color:#8e8e8e #4a4a4a #4a4a4a #8e8e8e"></div>
<div class="a" style="left:0px;top:1002px;width:157px;height:1px;background:#5a5c58;"></div>
<div class="t" style="left:16px;top:987px;color:#e8e8e8;font-size:11px;width:125px;text-align:center;">0 / 240</div>
<svg style="left:0;top:985px" width="157" height="17" viewBox="0 0 157 17"><path d="M10 4 L5 8.5 L10 13" fill="none" stroke="#d8d8d8" stroke-width="1"/><path d="M146 4 L151 8.5 L146 13" fill="none" stroke="#d8d8d8" stroke-width="1"/></svg>
<div class="a" style="left:0px;top:1003px;width:1552px;height:27px;background:#869461;"></div>
<svg style="left:0;top:1003px;overflow:hidden" width="1552" height="27" viewBox="0 0 1552 27" font-size="11.5" fill="#2a381a"><rect x="0.5" y="1.5" width="7" height="24.5" fill="#b0b068" stroke="#66683a" stroke-width="1"/><path d="M3.5 0v13M3.5 23v4M9.9 0v13M16.4 0v13M22.8 0v13M29.3 0v13M35.7 0v13M42.2 0v13M48.6 0v13M55.1 0v13M61.5 0v13M68.0 0v13M68.0 23v4M74.4 0v13M80.8 0v13M87.3 0v13M93.7 0v13M100.2 0v13M106.6 0v13M113.1 0v13M119.5 0v13M126.0 0v13M132.4 0v13M132.4 23v4M138.8 0v13M145.3 0v13M151.7 0v13M158.2 0v13M164.6 0v13M171.1 0v13M177.5 0v13M184.0 0v13M190.4 0v13M196.9 0v13M196.9 23v4M203.3 0v13M209.7 0v13M216.2 0v13M222.6 0v13M229.1 0v13M235.5 0v13M242.0 0v13M248.4 0v13M254.9 0v13M261.3 0v13M261.3 23v4M267.7 0v13M274.2 0v13M280.6 0v13M287.1 0v13M293.5 0v13M300.0 0v13M306.4 0v13M312.9 0v13M319.3 0v13M325.8 0v13M325.8 23v4M332.2 0v13M338.6 0v13M345.1 0v13M351.5 0v13M358.0 0v13M364.4 0v13M370.9 0v13M377.3 0v13M383.8 0v13M390.2 0v13M390.2 23v4M396.6 0v13M403.1 0v13M409.5 0v13M416.0 0v13M422.4 0v13M428.9 0v13M435.3 0v13M441.8 0v13M448.2 0v13M454.7 0v13M454.7 23v4M461.1 0v13M467.5 0v13M474.0 0v13M480.4 0v13M486.9 0v13M493.3 0v13M499.8 0v13M506.2 0v13M512.7 0v13M519.1 0v13M519.1 23v4M525.5 0v13M532.0 0v13M538.4 0v13M544.9 0v13M551.3 0v13M557.8 0v13M564.2 0v13M570.7 0v13M577.1 0v13M583.6 0v13M583.6 23v4M590.0 0v13M596.4 0v13M602.9 0v13M609.3 0v13M615.8 0v13M622.2 0v13M628.7 0v13M635.1 0v13M641.6 0v13M648.0 0v13M648.0 23v4M654.4 0v13M660.9 0v13M667.3 0v13M673.8 0v13M680.2 0v13M686.7 0v13M693.1 0v13M699.6 0v13M706.0 0v13M712.5 0v13M712.5 23v4M718.9 0v13M725.3 0v13M731.8 0v13M738.2 0v13M744.7 0v13M751.1 0v13M757.6 0v13M764.0 0v13M770.5 0v13M776.9 0v13M776.9 23v4M783.3 0v13M789.8 0v13M796.2 0v13M802.7 0v13M809.1 0v13M815.6 0v13M822.0 0v13M828.5 0v13M834.9 0v13M841.4 0v13M841.4 23v4M847.8 0v13M854.2 0v13M860.7 0v13M867.1 0v13M873.6 0v13M880.0 0v13M886.5 0v13M892.9 0v13M899.4 0v13M905.8 0v13M905.8 23v4M912.2 0v13M918.7 0v13M925.1 0v13M931.6 0v13M938.0 0v13M944.5 0v13M950.9 0v13M957.4 0v13M963.8 0v13M970.2 0v13M970.2 23v4M976.7 0v13M983.1 0v13M989.6 0v13M996.0 0v13M1002.5 0v13M1008.9 0v13M1015.4 0v13M1021.8 0v13M1028.3 0v13M1034.7 0v13M1034.7 23v4M1041.1 0v13M1047.6 0v13M1054.0 0v13M1060.5 0v13M1066.9 0v13M1073.4 0v13M1079.8 0v13M1086.3 0v13M1092.7 0v13M1099.2 0v13M1099.2 23v4M1105.6 0v13M1112.0 0v13M1118.5 0v13M1124.9 0v13M1131.4 0v13M1137.8 0v13M1144.3 0v13M1150.7 0v13M1157.2 0v13M1163.6 0v13M1163.6 23v4M1170.0 0v13M1176.5 0v13M1182.9 0v13M1189.4 0v13M1195.8 0v13M1202.3 0v13M1208.7 0v13M1215.2 0v13M1221.6 0v13M1228.0 0v13M1228.0 23v4M1234.5 0v13M1240.9 0v13M1247.4 0v13M1253.8 0v13M1260.3 0v13M1266.7 0v13M1273.2 0v13M1279.6 0v13M1286.1 0v13M1292.5 0v13M1292.5 23v4M1298.9 0v13M1305.4 0v13M1311.8 0v13M1318.3 0v13M1324.7 0v13M1331.2 0v13M1337.6 0v13M1344.1 0v13M1350.5 0v13M1357.0 0v13M1357.0 23v4M1363.4 0v13M1369.8 0v13M1376.3 0v13M1382.7 0v13M1389.2 0v13M1395.6 0v13M1402.1 0v13M1408.5 0v13M1415.0 0v13M1421.4 0v13M1421.4 23v4M1427.8 0v13M1434.3 0v13M1440.7 0v13M1447.2 0v13M1453.6 0v13M1460.1 0v13M1466.5 0v13M1473.0 0v13M1479.4 0v13M1485.9 0v13M1485.9 23v4M1492.3 0v13M1498.7 0v13M1505.2 0v13M1511.6 0v13M1518.1 0v13M1524.5 0v13M1531.0 0v13M1537.4 0v13M1543.9 0v13M1550.3 0v13M1550.3 23v4" stroke="#bac3a4" stroke-width="1" fill="none" shape-rendering="crispEdges"/><text x="68.0" y="23.500" text-anchor="middle">10</text><text x="132.4" y="23.500" text-anchor="middle">20</text><text x="196.9" y="23.500" text-anchor="middle">30</text><text x="261.3" y="23.500" text-anchor="middle">40</text><text x="325.8" y="23.500" text-anchor="middle">50</text><text x="390.2" y="23.500" text-anchor="middle">60</text><text x="454.7" y="23.500" text-anchor="middle">70</text><text x="519.1" y="23.500" text-anchor="middle">80</text><text x="583.6" y="23.500" text-anchor="middle">90</text><text x="648.0" y="23.500" text-anchor="middle">100</text><text x="712.5" y="23.500" text-anchor="middle">110</text><text x="776.9" y="23.500" text-anchor="middle">120</text><text x="841.4" y="23.500" text-anchor="middle">130</text><text x="905.8" y="23.500" text-anchor="middle">140</text><text x="970.2" y="23.500" text-anchor="middle">150</text><text x="1034.7" y="23.500" text-anchor="middle">160</text><text x="1099.2" y="23.500" text-anchor="middle">170</text><text x="1163.6" y="23.500" text-anchor="middle">180</text><text x="1228.0" y="23.500" text-anchor="middle">190</text><text x="1292.5" y="23.500" text-anchor="middle">200</text><text x="1357.0" y="23.500" text-anchor="middle">210</text><text x="1421.4" y="23.500" text-anchor="middle">220</text><text x="1485.9" y="23.500" text-anchor="middle">230</text><text x="1550.3" y="23.500" text-anchor="middle">240</text></svg>
<div class="a" style="left:0px;top:1030px;width:1920px;height:50px;background:#757575;"></div>
<div class="a" style="left:0px;top:1030px;width:1553px;height:1px;background:#5e5e5e;"></div>
<div class="a" style="left:2px;top:1033px;width:297px;height:22px;background:#dcc5c5;border-style:solid;border-width:2px 2px 1px 1px;border-color:#0a0a0a #fafafa #fafafa #0a0a0a"></div>
<div class="a" style="left:2px;top:1055px;width:297px;height:23px;background:#fff;border-style:solid;border-width:2px 2px 2px 1px;border-color:#0a0a0a #fafafa #fafafa #0a0a0a"></div>
<div class="t" style="left:5px;top:1060px;color:#1414e6;font-family:'Liberation Mono',monospace;font-size:11.6px">&quot;C:\gmax\gamepacks\FSX_GMaxGamepack\&quot;</div>
<div class="a" style="left:301px;top:1032px;width:1px;height:48px;background:#8a8a8a;"></div>
<div class="a" style="left:304px;top:1031px;width:1px;height:49px;background:#4e4e4e;"></div>
<div class="a" style="left:305px;top:1031px;width:1px;height:49px;background:#868686;"></div>
<div class="fr" style="left:307px;top:1034px;width:935px;height:21px"></div>
<div class="t" style="left:313px;top:1038px;color:#e4e4e4;font-size:11px;">None Selected</div>
<div class="fr" style="left:307px;top:1059px;width:1046px;height:21px;border-bottom:none"></div>
<div class="t" style="left:313px;top:1063px;color:#e4e4e4;font-size:11px;letter-spacing:-0.13px;">Click or click-and-drag to select objects</div>
<div class="fr" style="left:1356px;top:1059px;width:98px;height:21px;border-bottom:none"></div>
<div class="t" style="left:1362px;top:1063px;color:#e4e4e4;font-size:11px;">Add Time Tag</div>
<div class="t" style="left:1298px;top:1038px;color:#e4e4e4;font-size:11px;">X:</div>
<div class="sunk" style="left:1310px;top:1035px;width:56px;height:19px;background:#9b9b9b;border-width:2px 1px 1px 2px;border-color:#3a3a3a #b0b0b0 #b0b0b0 #3a3a3a"></div>
<div class="t" style="left:1380px;top:1038px;color:#e4e4e4;font-size:11px;">Y:</div>
<div class="sunk" style="left:1392px;top:1035px;width:56px;height:19px;background:#9b9b9b;border-width:2px 1px 1px 2px;border-color:#3a3a3a #b0b0b0 #b0b0b0 #3a3a3a"></div>
<div class="t" style="left:1462px;top:1038px;color:#e4e4e4;font-size:11px;">Z:</div>
<div class="sunk" style="left:1474px;top:1035px;width:56px;height:19px;background:#9b9b9b;border-width:2px 1px 1px 2px;border-color:#3a3a3a #b0b0b0 #b0b0b0 #3a3a3a"></div>
<div class="fr" style="left:1545px;top:1035px;width:99px;height:20px"></div>
<div class="t" style="left:1551px;top:1038px;color:#e4e4e4;font-size:11px;">Grid = 32 6/8&#39;</div>
<div class="btn" style="left:1650px;top:1033px;width:46px;height:45px;line-height:43px;border-width:2px 1px 1px 2px">Animate</div>
<div class="sunk" style="left:1727px;top:1057px;width:67px;height:19px;background:#9b9b9b;border-width:2px 1px 1px 2px;border-color:#3a3a3a #b0b0b0 #b0b0b0 #3a3a3a"></div>
<div class="t" style="left:1731px;top:1060px;color:#5a5a5a;font-size:11px;">0</div>
<div class="a" style="left:1570px;top:1058px;width:23px;height:22px;background:#8a9869;border:1px solid;border-color:#5c6250 #a0a690 #a0a690 #5c6250"></div>
<svg style="left:0;top:0" width="1920" height="1080" viewBox="0 0 1920 1080"><path d="M1254 1041 v-1.500 a2.500 2.500 0 0 1 5 0 v1.500" fill="none" stroke="#1a1a1a" stroke-width="1.200"/><rect x="1252.500" y="1041.500" width="8" height="7" fill="#d8d8d8" stroke="#1a1a1a" stroke-width="0.800"/><path d="M1252.500 1043.800 h8 M1252.500 1046 h8" stroke="#1a1a1a" stroke-width="0.800"/>
<rect x="1276.500" y="1036.500" width="14" height="14" fill="none" stroke="#0a0a0a" stroke-width="1.200"/><circle cx="1283.500" cy="1043.500" r="2" fill="none" stroke="#0a0a0a" stroke-width="1"/>
<path d="M1463.500 1068 L1470 1061 L1477 1062.500 L1478.500 1069 L1472 1075 L1465 1073.500 Z" fill="#f4f4f4" stroke="#2a2a2a" stroke-width="0.700"/><path d="M1470.500 1066.500 L1472 1075 M1463.500 1068 L1470.500 1066.500 L1477 1062.500" fill="none" stroke="#9a9a9a" stroke-width="0.700"/>
<rect x="1493.500" y="1062" width="10" height="12" fill="#c8c8c8" stroke="#0a0a0a" stroke-width="1.800" stroke-dasharray="1.500 1.300"/><circle cx="1503" cy="1068.500" r="3.500" fill="#4a4a4a" stroke="#111" stroke-width="0.600"/><circle cx="1502" cy="1067.500" r="1.200" fill="#d0d0d0"/>
<path d="M1521.500 1065 L1529 1061 L1535.500 1064 L1535.500 1072 L1528 1076 L1521.500 1073 Z" fill="#f4f4f4" stroke="#1a1a1a" stroke-width="0.800"/><path d="M1521.500 1065 L1528 1068 L1535.500 1064 M1528 1068 V1076" fill="none" stroke="#1a1a1a" stroke-width="0.700"/><path d="M1521.500 1073 L1529 1069.500 L1535.500 1072 M1529 1061 V1069.500" fill="none" stroke="#8a8a8a" stroke-width="0.500"/>
<rect x="1544" y="1060" width="1" height="18" fill="#565656"/><rect x="1545" y="1060" width="1" height="18" fill="#8c8c8c"/>
<rect x="1620" y="1060" width="1" height="18" fill="#565656"/><rect x="1621" y="1060" width="1" height="18" fill="#8c8c8c"/>
<path d="M1555.8 1074.9 L1553.0 1072.3 A2.300 2.300 0 1 1 1556.3 1069.0 L1559.0 1071.7" fill="none" stroke="#b01018" stroke-width="2.800"/><path d="M1554.8 1073.9 L1556.2 1075.3 M1558.0 1070.7 L1559.4 1072.1" stroke="#fafafa" stroke-width="2.800"/>
<text x="1559" y="1066.500" font-size="8" fill="#111">3</text>
<path d="M1578.7 1075.7 L1575.9 1073.1 A2.300 2.300 0 1 1 1579.2 1069.8 L1581.9 1072.5" fill="none" stroke="#b01018" stroke-width="2.800"/><path d="M1577.7 1074.7 L1579.1 1076.1 M1580.9 1071.5 L1582.3 1072.9" stroke="#fafafa" stroke-width="2.800"/>
<path d="M1580 1068 L1586 1062 M1574 1075.800 H1590 M1585.300 1066.500 L1587.600 1072.500" stroke="#111" stroke-width="0.900" fill="none"/><path d="M1583.300 1064.800 h3.400 v3 z M1585.300 1072.300 h4.600 l-2.300 3z" stroke="#111" stroke-width="0.500" fill="#111"/>
<path d="M1601.6 1074.9 L1598.8 1072.3 A2.300 2.300 0 1 1 1602.1 1069.0 L1604.8 1071.7" fill="none" stroke="#b01018" stroke-width="2.800"/><path d="M1600.6 1073.9 L1602.0 1075.3 M1603.8 1070.7 L1605.2 1072.1" stroke="#fafafa" stroke-width="2.800"/>
<text x="1603.500" y="1068" font-size="9" fill="#111">%</text>
<path d="M1630.6 1074.9 L1627.8 1072.3 A2.300 2.300 0 1 1 1631.1 1069.0 L1633.8 1071.7" fill="none" stroke="#b01018" stroke-width="2.800"/><path d="M1629.6 1073.9 L1631.0 1075.3 M1632.8 1070.7 L1634.2 1072.1" stroke="#fafafa" stroke-width="2.800"/>
<path d="M1640 1061.600 h-5.500 v5.500 M1640 1067.600 h-5.500 v4" stroke="#f4f4f4" stroke-width="1.200" fill="none"/><path d="M1636.300 1065 l1.800 -2.200 l1.800 2.200z M1636.300 1068.800 l1.800 2.200 l1.800 -2.200z" fill="#111"/>
<g fill="#3a3a3a"><rect x="1703.500" y="1040" width="1.600" height="8.500"/><path d="M1712 1040 v8.500 l-6.500 -4.250z M1719 1040 v8.500 l-6.500 -4.250z"/>
<path d="M1737.500 1040 v8.500 l-6.500 -4.250z"/><rect x="1739" y="1040" width="1.300" height="8.500"/><rect x="1740.800" y="1040" width="1.300" height="8.500"/>
<path d="M1757.500 1039 v9.500 l6.500 -4.750z"/>
<rect x="1778.500" y="1040" width="1.300" height="8.500"/><rect x="1780.300" y="1040" width="1.300" height="8.500"/><path d="M1783 1040 v8.500 l6.500 -4.250z"/>
<path d="M1801 1040 v8.500 l6.500 -4.250z M1807.500 1040 v8.500 l6.500 -4.250z"/><rect x="1814.300" y="1040" width="1.600" height="8.500"/></g>
<rect x="1753.500" y="1037.500" width="13" height="12.500" fill="none" stroke="#0a0a0a" stroke-width="1.200"/>
<path d="M1771 1048.5 L1771 1053 L1766.5 1053 Z" fill="#fff"/><path d="M1771.5 1050 L1771.5 1053.8 L1768 1053.8" fill="none" stroke="#111" stroke-width="0.900"/>
<path d="M1889.5 1048.5 L1889.5 1053 L1885.0 1053 Z" fill="#fff"/><path d="M1890.0 1050 L1890.0 1053.8 L1886.5 1053.8" fill="none" stroke="#111" stroke-width="0.900"/>
<path d="M1913 1048.5 L1913 1053 L1908.5 1053 Z" fill="#fff"/><path d="M1913.5 1050 L1913.5 1053.8 L1910 1053.8" fill="none" stroke="#111" stroke-width="0.900"/>
<path d="M1889.5 1071.5 L1889.5 1076 L1885.0 1076 Z" fill="#fff"/><path d="M1890.0 1073 L1890.0 1076.8 L1886.5 1076.8" fill="none" stroke="#111" stroke-width="0.900"/>
<rect x="1724" y="1035" width="1" height="43" fill="#5c5c5c"/><rect x="1725" y="1035" width="1" height="43" fill="#888"/>
<rect x="1796" y="1035" width="1" height="43" fill="#5c5c5c"/><rect x="1797" y="1035" width="1" height="43" fill="#888"/>
<rect x="1821" y="1035" width="1" height="43" fill="#5c5c5c"/><rect x="1822" y="1035" width="1" height="43" fill="#888"/>
<circle cx="1706.500" cy="1064.500" r="2.600" fill="none" stroke="#1a1a1a" stroke-width="1.600"/><path d="M1709 1064.500 h9.500 M1714 1064.500 v3.500 M1716.500 1064.500 v3" stroke="#1a1a1a" stroke-width="1.500" fill="none"/>
<rect x="1803.500" y="1060" width="9" height="9.500" fill="#8a8a8a" stroke="#0a0a0a" stroke-width="1.200"/><rect x="1803" y="1059.500" width="10" height="2.500" fill="#0a0a0a"/><circle cx="1811.500" cy="1066" r="3.800" fill="#f8f8f8" stroke="#b01020" stroke-width="1.300"/><path d="M1811.500 1063.800 v2.500 h2" stroke="#111" stroke-width="0.900" fill="none"/>
<path d="M1835.51 1043.51 L1841 1050" stroke="#1414b0" stroke-width="1.800"/><circle cx="1832.5" cy="1040.5" r="4.3" fill="#d4d4d4" stroke="#14148c" stroke-width="1.100"/><circle cx="1831.5" cy="1039.5" r="1.935" fill="#f4f4f4"/>
<rect x="1853.5" y="1036.5" width="12" height="10" fill="#c8c8c8" stroke="#a01818" stroke-width="1.300"/><path d="M1859.5 1036.5 v10 M1853.5 1041.5 h12" stroke="#a01818" stroke-width="1.200"/>
<path d="M1857.02 1047.02 L1860 1051" stroke="#1414b0" stroke-width="1.800"/><circle cx="1854.5" cy="1044.5" r="3.6" fill="#d4d4d4" stroke="#14148c" stroke-width="1.100"/><circle cx="1853.5" cy="1043.5" r="1.62" fill="#f4f4f4"/>
<path d="M1873 1039.500 v-3 h3 M1886 1036.500 h3 v3 M1889 1048 v3 h-3 M1876 1051 h-3 v-3" fill="none" stroke="#111" stroke-width="1.200"/><path d="M1875.500 1041 l3 -3 h8 v8 l-3 3 h-8z" fill="#c8c8c8" stroke="#1414a0" stroke-width="1.100"/><path d="M1875.500 1041 h8 v8 M1883.500 1041 l3 -3" fill="none" stroke="#1414a0" stroke-width="1"/><path d="M1878.500 1038.300 h7.500" stroke="#fff" stroke-width="1"/>
<rect x="1899.5" y="1036.5" width="12" height="10" fill="#c8c8c8" stroke="#a01818" stroke-width="1.300"/><path d="M1905.5 1036.5 v10 M1899.5 1041.5 h12" stroke="#a01818" stroke-width="1.200"/>
<rect x="1899.500" y="1042.500" width="7" height="7.500" fill="#c8c8c8" stroke="#1414a0" stroke-width="1.100"/><rect x="1896.500" y="1044.500" width="7" height="7" fill="#c8c8c8" stroke="#1414a0" stroke-width="1.100"/>
<defs><pattern id="dots" width="2" height="2" patternUnits="userSpaceOnUse"><rect width="2" height="2" fill="#e8e8e8"/><rect width="1" height="1" fill="#333"/><rect x="1" y="1" width="1" height="1" fill="#333"/></pattern></defs>
<rect x="1827.500" y="1058.500" width="15" height="14" fill="url(#dots)" stroke="#0a0a0a" stroke-width="1.300" stroke-dasharray="2 1.300"/>
<path d="M1836.3 1066.8 L1840 1070.5" stroke="#1414b0" stroke-width="1.800"/><circle cx="1833.5" cy="1064" r="4" fill="#d4d4d4" stroke="#14148c" stroke-width="1.100"/><circle cx="1832.5" cy="1063" r="1.8" fill="#f4f4f4"/>
<path d="M1853 1066 l-2.300 -2.500 l1.300 -1.200 l2.800 2.300 v-4.800 h1.700 v-1.300 h1.900 v-0.500 h1.900 v1.200 h1.800 v1.800 h1.600 v4.500 l-1.500 5 v3 h-7.500 v-2.500z" fill="#f4f4f4" stroke="#1a1a1a" stroke-width="0.800"/><path d="M1856.600 1060 v4.500 M1858.600 1059 v5.500 M1860.500 1059.500 v5 M1862.300 1061.500 v3.500" stroke="#5a5a5a" stroke-width="0.600"/>
<circle cx="1880.500" cy="1066" r="4.800" fill="#b8b8b8"/><path d="M1880.500 1066 V1058.500 M1880.500 1066 L1887.500 1068 M1880.500 1066 L1874 1072" stroke="#1414a0" stroke-width="1.100" fill="none"/><path d="M1880.500 1057 l1.800 3 h-3.600z M1889 1068.500 l-3.300 1 l0.700 -3z M1873 1073 l1 -3.300 l2.300 2.300z" fill="#111"/>
<rect x="1897.500" y="1058.500" width="10.500" height="10.500" fill="#7a7a7a" stroke="#14148c" stroke-width="1.300"/><path d="M1908 1065 h3.500 v7.500 h-7.500 v-3.500" fill="none" stroke="#111" stroke-width="1.200"/><path d="M1900.500 1061.500 L1906 1067" stroke="#111" stroke-width="1" stroke-dasharray="1.500 1"/><path d="M1899.500 1060.500 l3 0.500 l-2.500 2.500z" fill="#111"/></svg>
</body></html>
